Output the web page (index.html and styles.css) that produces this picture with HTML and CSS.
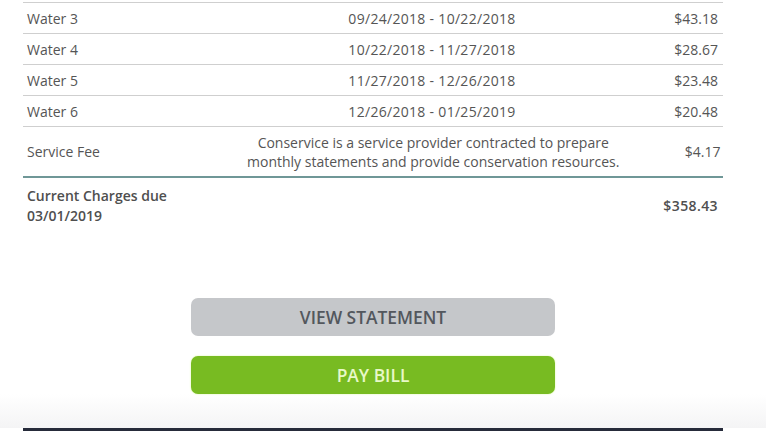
FILE: index.html
```html
<!DOCTYPE html>
<html>
<head>
<meta charset="utf-8">
<link rel="stylesheet" href="styles.css">
</head>
<body>
<div class="page">
  <div class="charges">
    <div class="row">
      <div class="name">Water 3</div>
      <div class="period date">09/24/2018 - 10/22/2018</div>
      <div class="amount">$43.18</div>
    </div>
    <div class="row">
      <div class="name">Water 4</div>
      <div class="period date">10/22/2018 - 11/27/2018</div>
      <div class="amount">$28.67</div>
    </div>
    <div class="row">
      <div class="name">Water 5</div>
      <div class="period date">11/27/2018 - 12/26/2018</div>
      <div class="amount">$23.48</div>
    </div>
    <div class="row">
      <div class="name">Water 6</div>
      <div class="period date">12/26/2018 - 01/25/2019</div>
      <div class="amount">$20.48</div>
    </div>
    <div class="row fee">
      <div class="name">Service Fee</div>
      <div class="period">Conservice is a service provider contracted to prepare<br>monthly statements and provide conservation resources.</div>
      <div class="amount">$4.17</div>
    </div>
    <div class="total">
      <div class="name">Current Charges due<br>03/01/2019</div>
      <div class="amount">$358.43</div>
    </div>
  </div>
  <div class="actions">
    <button class="btn btn-view">VIEW STATEMENT</button>
    <button class="btn btn-pay">PAY BILL</button>
  </div>
  <div class="footer-fade"></div>
  <div class="footer-bar"></div>
</div>
</body>
</html>
```
FILE: styles.css
```css
* { box-sizing: border-box; }
html, body {
  margin: 0;
  padding: 0;
  background: #ffffff;
  width: 766px;
  height: 431px;
  overflow: hidden;
}
body {
  font-family: "Open Sans", "Noto Sans", sans-serif;
  color: #555555;
  font-size: 14px;
}
.page {
  padding-top: 2px;
}
.charges {
  margin: 0 43px 0 23px;
  border-top: 1px solid #cfcfcf;
}
.row {
  display: grid;
  grid-template-columns: 220px 1fr 101px;
  align-items: center;
  height: 31px;
  border-bottom: 1px solid #cfcfcf;
  padding: 0 5px 0 4px;
}
.row.fee {
  height: 51px;
  border-bottom: 2px solid #6f9797;
}
.period {
  text-align: center;
  line-height: 19px;
  white-space: nowrap;
}
.date {
  letter-spacing: 0.3px;
}
.amount {
  text-align: right;
}
.total {
  display: flex;
  justify-content: space-between;
  align-items: center;
  padding: 8px 5px 0 4px;
  font-weight: 600;
  line-height: 20px;
  color: #4f4f4f;
}
.total .amount {
  letter-spacing: 0.4px;
}
.actions {
  display: flex;
  flex-direction: column;
  align-items: center;
  gap: 20px;
  margin: 72px 43px 0 23px;
}
.btn {
  width: 364px;
  height: 38px;
  border: none;
  border-radius: 7px;
  font-family: "Open Sans", "Noto Sans", sans-serif;
  font-size: 17.4px;
  font-weight: 600;
  padding: 0;
  margin: 0;
}
.btn-view {
  background: #c5c7ca;
  color: #53575d;
}
.btn-pay {
  background: #78bb22;
  color: #e8f8c8;
  box-shadow: 0 0 2px #d9f5a0;
}
.footer-fade {
  height: 34px;
  background: linear-gradient(#ffffff, #f4f4f5);
}
.footer-bar {
  margin: 0 43px 0 23px;
  height: 4px;
  background: #262b3a;
}
```
